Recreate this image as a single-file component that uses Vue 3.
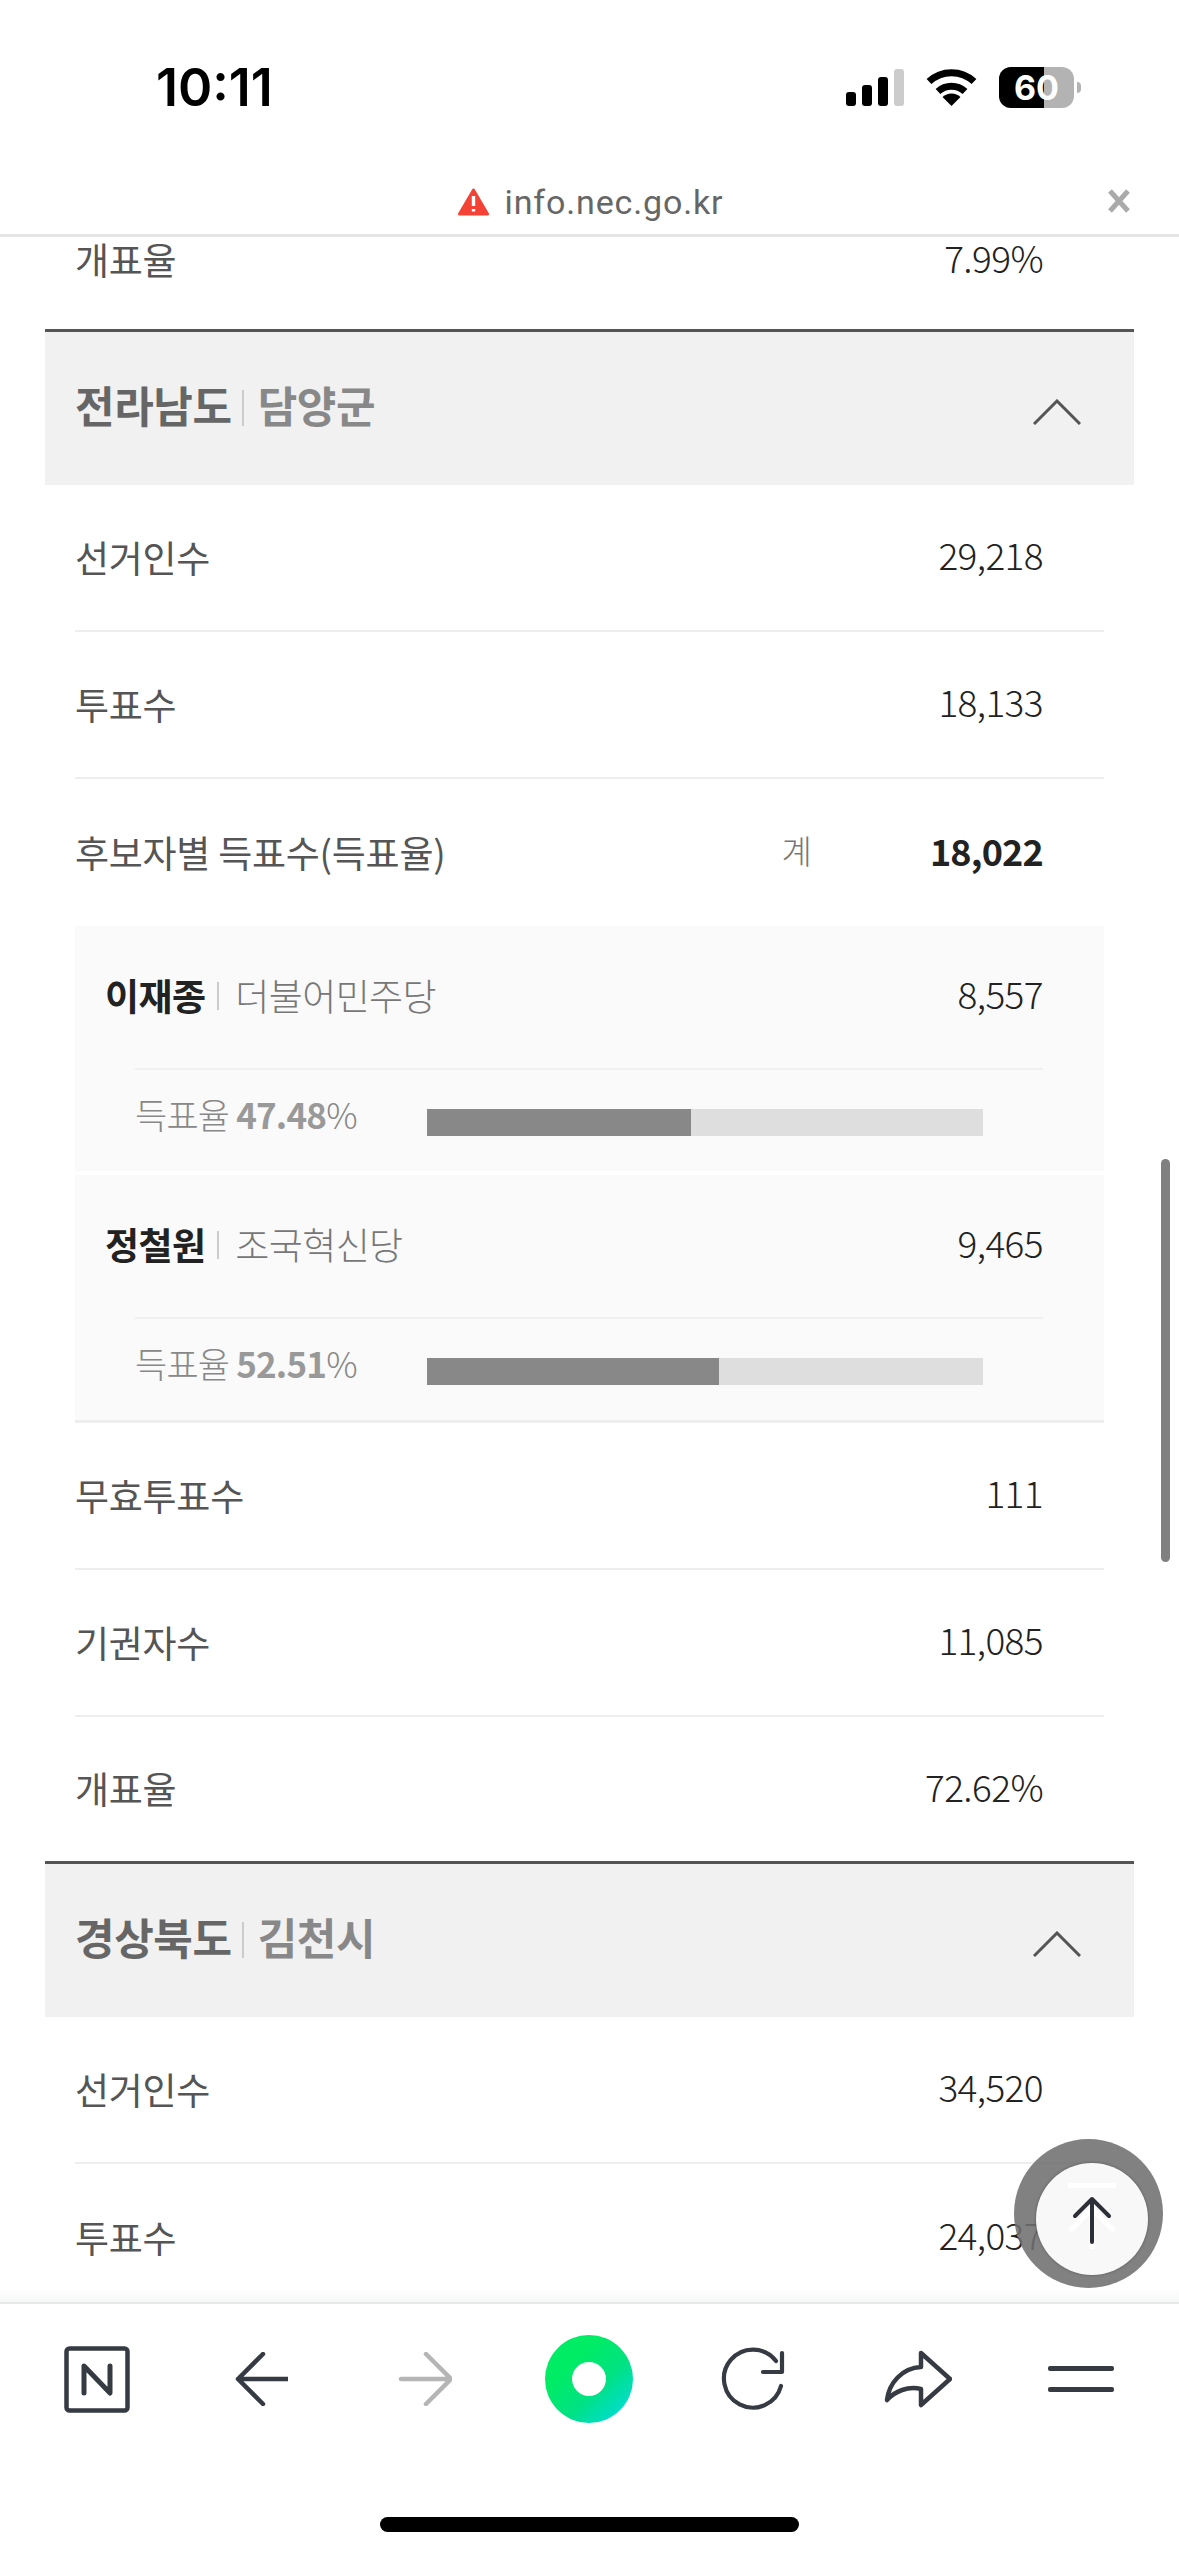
<script setup>
const firstRows = [
  { label: '선거인수', value: '29,218' },
  { label: '투표수', value: '18,133' }
]

const candidates = [
  { name: '이재종', party: '더불어민주당', votes: '8,557', rate: 47.48 },
  { name: '정철원', party: '조국혁신당', votes: '9,465', rate: 52.51 }
]

const lastRows = [
  { label: '무효투표수', value: '111' },
  { label: '기권자수', value: '11,085' },
  { label: '개표율', value: '72.62%' }
]

const secondRows = [
  { label: '선거인수', value: '34,520' },
  { label: '투표수', value: '24,037' }
]
</script>

<template>
  <div class="phone">
    <header class="status">
      <span class="time">10:11</span>
      <div class="status-icons">
        <div class="signal">
          <i class="b1"></i><i class="b2"></i><i class="b3"></i><i class="b4"></i>
        </div>
        <svg class="wifi" viewBox="0 0 51 37" fill="none" stroke="#000" stroke-width="7">
          <path d="M3 12.5A33 33 0 0 1 48 12.5" />
          <path d="M12 22.5A20 20 0 0 1 39 22.5" />
          <path d="M25.5 37L16.5 28A13 13 0 0 1 34.5 28Z" fill="#000" stroke="none" />
        </svg>
        <div class="battery">
          <div class="battery-body"><div class="battery-fill"></div><span>60</span></div>
          <div class="battery-cap"></div>
        </div>
      </div>
    </header>

    <div class="urlbar">
      <svg class="warn" viewBox="0 0 31 28">
        <path d="M15.5 2L29.5 26H1.5Z" fill="#f44336" stroke="#f44336" stroke-width="3" stroke-linejoin="round" />
        <path d="M15.5 8V18M15.5 21V23.5" stroke="#fff" stroke-width="3.4" />
      </svg>
      <span class="domain">info.nec.go.kr</span>
      <svg class="close" viewBox="0 0 24 24" stroke="#aaa" stroke-width="5">
        <path d="M3 2L21 22M21 2L3 22" />
      </svg>
    </div>

    <main class="content">
      <div class="row row-cut">
        <span class="label">개표율</span>
        <span class="value">7.99%</span>
      </div>

      <section class="section">
        <div class="section-head">
          <h2>전라남도<i class="sep"></i><span>담양군</span></h2>
          <svg class="chevron" viewBox="0 0 48 26" fill="none" stroke="#555" stroke-width="3">
            <path d="M1 25L24 2L47 25" />
          </svg>
        </div>
        <div v-for="row in firstRows" :key="row.label" class="row">
          <span class="label">{{ row.label }}</span>
          <span class="value">{{ row.value }}</span>
        </div>
        <div class="row row-plain">
          <span class="label">후보자별 득표수(득표율)</span>
          <div class="total">
            <span class="total-key">계</span>
            <strong>18,022</strong>
          </div>
        </div>
        <div class="candidates">
          <div v-for="c in candidates" :key="c.name" class="candidate">
            <div class="candidate-top">
              <div class="candidate-name"><b>{{ c.name }}</b><i class="sep"></i><span>{{ c.party }}</span></div>
              <span class="value">{{ c.votes }}</span>
            </div>
            <div class="candidate-rate">
              <div class="rate-text">득표율 <b>{{ c.rate }}</b><em>%</em></div>
              <div class="bar"><div class="bar-fill" :style="{ width: c.rate + '%' }"></div></div>
            </div>
          </div>
        </div>
        <div v-for="row in lastRows" :key="row.label" class="row">
          <span class="label">{{ row.label }}</span>
          <span class="value">{{ row.value }}</span>
        </div>
      </section>

      <section class="section">
        <div class="section-head">
          <h2>경상북도<i class="sep"></i><span>김천시</span></h2>
          <svg class="chevron" viewBox="0 0 48 26" fill="none" stroke="#555" stroke-width="3">
            <path d="M1 25L24 2L47 25" />
          </svg>
        </div>
        <div v-for="row in secondRows" :key="row.label" class="row">
          <span class="label">{{ row.label }}</span>
          <span class="value">{{ row.value }}</span>
        </div>
      </section>
    </main>

    <footer class="toolbar">
      <div class="tools">
        <svg width="66" height="67" viewBox="0 0 66 67" fill="none" stroke="#363a42" stroke-width="4.5" stroke-linejoin="round" stroke-linecap="round">
          <rect x="2.5" y="2.5" width="61" height="62" rx="3" />
          <path d="M20 47V20L46 47V20" stroke-width="5" />
        </svg>
        <svg width="54" height="54" viewBox="-2 0 54 54" fill="none" stroke="#363a42" stroke-width="4.5" stroke-linejoin="round" stroke-linecap="round">
          <path d="M27 2L2 27L27 52M2 27H52" />
        </svg>
        <svg width="54" height="54" viewBox="-1 0 54 54" fill="none" stroke="#b5b5b5" stroke-width="4.5" stroke-linejoin="round" stroke-linecap="round">
          <path d="M27 2L52 27L27 52M52 27H2" />
        </svg>
        <svg width="88" height="88" viewBox="0 0 88 88">
          <defs>
            <linearGradient id="logoGrad" x1="0.3" y1="0.3" x2="0.88" y2="0.92">
              <stop offset="0" stop-color="#00ec64" />
              <stop offset="0.5" stop-color="#00e282" />
              <stop offset="1" stop-color="#00dcd4" />
            </linearGradient>
          </defs>
          <circle cx="44" cy="44" r="44" fill="url(#logoGrad)" />
          <circle cx="44" cy="44" r="17" fill="#fff" />
        </svg>
        <svg width="66" height="66" viewBox="0 0 66 66" fill="none" stroke="#363a42" stroke-width="4.2" stroke-linejoin="round" stroke-linecap="round">
          <path d="M56 15A29 29 0 1 0 61 40" />
          <path d="M62 7V26H43" />
        </svg>
        <svg width="70" height="60" viewBox="0 0 70 60" fill="none" stroke="#363a42" stroke-width="4.5" stroke-linejoin="round" stroke-linecap="round">
          <path d="M39 4L68 30L39 56V40C26 37 13 42 5 51C7 34 20 19 39 18Z" />
        </svg>
        <div class="menu"><i></i><i></i></div>
      </div>
      <div class="home-bar"></div>
    </footer>

    <div class="scrollbar"></div>

    <div class="to-top">
      <div class="to-top-inner">
        <svg class="ghost" viewBox="0 0 48 66" fill="none" stroke="#fff" stroke-width="5">
          <path d="M0 2.5H48M24 14V66M2 48L24 26L46 48" />
        </svg>
        <svg class="up" viewBox="0 0 40 48" fill="none" stroke="#2c2e38" stroke-width="4" stroke-linecap="round" stroke-linejoin="round">
          <path d="M20 3V46M3 20L20 3L37 20" />
        </svg>
      </div>
    </div>
  </div>
</template>

<style scoped>
.phone {
  position: relative;
  width: 1179px;
  height: 2556px;
  display: flex;
  flex-direction: column;
  overflow: hidden;
  background: #fff;
  font-family: "Noto Sans CJK KR", "Noto Sans", sans-serif;
  color: #555;
}

.status {
  height: 174px;
  flex: none;
  display: flex;
  align-items: center;
  justify-content: space-between;
  padding: 0 98px 0 156px;
  box-sizing: border-box;
}

.time {
  font-family: Inter, "Liberation Sans", sans-serif;
  font-size: 52px;
  font-weight: 600;
  color: #000;
}

.status-icons {
  display: flex;
  align-items: center;
}

.signal {
  display: flex;
  align-items: flex-end;
  gap: 6px;
  height: 37px;
}

.signal i {
  width: 10px;
  border-radius: 3px;
  background: #000;
}

.signal .b1 { height: 14px; }
.signal .b2 { height: 21px; }
.signal .b3 { height: 29px; }
.signal .b4 { height: 37px; background: #ccc; }

.wifi {
  width: 51px;
  height: 37px;
  margin-left: 22px;
}

.battery {
  display: flex;
  align-items: center;
  margin-left: 22px;
}

.battery-body {
  position: relative;
  width: 75px;
  height: 41px;
  border-radius: 12px;
  overflow: hidden;
  background: #b3b3b3;
  text-align: center;
}

.battery-fill {
  position: absolute;
  left: 0;
  top: 0;
  bottom: 0;
  width: 60%;
  background: #000;
}

.battery-body span {
  position: relative;
  font-family: Inter, "Liberation Sans", sans-serif;
  font-size: 34px;
  line-height: 41px;
  font-weight: 700;
  color: #fff;
}

.battery-cap {
  width: 4px;
  height: 11px;
  margin-left: 3px;
  border-radius: 0 4px 4px 0;
  background: #b3b3b3;
}

.urlbar {
  position: relative;
  z-index: 1;
  flex: none;
  height: 63px;
  display: flex;
  align-items: center;
  justify-content: center;
  gap: 16px;
  box-sizing: border-box;
  border-bottom: 3px solid #e5e5e5;
  padding: 0 0 4px 2px;
}

.warn {
  width: 31px;
  height: 28px;
}

.domain {
  font-family: Roboto, "Noto Sans", sans-serif;
  font-size: 34px;
  letter-spacing: 0.85px;
  color: #666;
}

.close {
  position: absolute;
  left: 1107px;
  top: 15px;
  width: 24px;
  height: 24px;
}

.content {
  flex: 1;
  min-height: 0;
  padding: 0 45px;
}

.row {
  height: 147px;
  margin: 0 30px;
  padding: 0 61px 2px 0;
  display: flex;
  align-items: center;
  justify-content: space-between;
  box-sizing: border-box;
  border-bottom: 2px solid #eee;
}

.row-cut {
  height: 92px;
  padding-bottom: 48px;
  border-bottom: 0;
}

.row-cut .label,
.row-cut .value {
  line-height: 44px;
}

.row-plain,
.section > .row:last-child {
  border-bottom: 0;
}

.section > .row:last-child {
  height: 144px;
}

.section:last-child > .row:last-child {
  height: 147px;
}

.label {
  font-size: 37px;
  font-weight: 400;
  letter-spacing: -0.25px;
  color: #555;
}

.value {
  font-size: 37px;
  font-weight: 300;
  letter-spacing: -0.6px;
  line-height: 48px;
  margin-bottom: 5px;
  color: #222;
}

.section-head {
  height: 156px;
  box-sizing: border-box;
  border-top: 3px solid #555;
  background: #f1f1f1;
  padding: 0 53px 0 30px;
  display: flex;
  align-items: center;
  justify-content: space-between;
}

.section-head h2 {
  margin: 0 0 10px;
  display: flex;
  align-items: center;
  font-size: 43px;
  font-weight: 700;
  letter-spacing: -0.4px;
  color: #666;
}

.section-head h2 span {
  color: #888;
  font-weight: 700;
}

.section-head .sep {
  height: 36px;
  margin: 8px 14px 0 10px;
}

.sep {
  display: block;
  width: 2px;
  height: 28px;
  margin: 2px 16px 0 12px;
  background: #ccc;
}

.chevron {
  width: 48px;
  height: 26px;
  margin-top: 6px;
}

.total {
  display: flex;
  align-items: center;
  margin-bottom: 4px;
}

.total-key {
  font-size: 33px;
  font-weight: 300;
  color: #777;
  margin-right: 118px;
}

.total strong {
  font-size: 36px;
  font-weight: 700;
  letter-spacing: -0.8px;
  color: #222;
}

.candidates {
  margin: 0 30px;
  display: flex;
  flex-direction: column;
  gap: 4px;
  border-bottom: 3px solid #eee;
}

.candidate {
  height: 245px;
  background: #fafafa;
  padding: 0 61px 0 30px;
  box-sizing: border-box;
}

.candidate-top {
  height: 144px;
  padding-bottom: 6px;
  box-sizing: border-box;
  display: flex;
  align-items: center;
  justify-content: space-between;
  position: relative;
}

.candidate-top::after {
  content: "";
  position: absolute;
  left: 30px;
  right: 0;
  bottom: 0;
  height: 2px;
  background: #f0f0f0;
}

.candidate-name {
  display: flex;
  align-items: center;
  font-size: 37px;
  letter-spacing: -0.6px;
}

.candidate-name b {
  font-weight: 700;
  color: #222;
}

.candidate-name span {
  font-weight: 300;
  color: #777;
}

.candidate-rate {
  height: 101px;
  padding: 0 60px 0 30px;
  display: flex;
  align-items: center;
}

.rate-text {
  width: 292px;
  flex: none;
  margin-bottom: 14px;
  font-size: 35px;
  font-weight: 300;
  letter-spacing: -0.8px;
  color: #888;
}

.rate-text b {
  font-weight: 700;
  color: #999;
}

.rate-text em {
  font-style: normal;
}

.bar {
  flex: 1;
  height: 27px;
  margin-top: 3px;
  background: #dedede;
}

.bar-fill {
  height: 100%;
  background: #888;
}

.toolbar {
  position: relative;
  flex: none;
  height: 254px;
  background: #fff;
  box-sizing: border-box;
  border-top: 2px solid #e8e8e8;
}

.toolbar::before {
  content: "";
  position: absolute;
  left: 0;
  right: 0;
  top: -16px;
  height: 14px;
  background: linear-gradient(rgba(246, 247, 248, 0), #f6f7f8);
}

.tools {
  height: 150px;
  padding-left: 15px;
  display: grid;
  grid-template-columns: repeat(7, 164px);
  align-items: center;
  justify-items: center;
}

.menu {
  width: 66px;
  display: flex;
  flex-direction: column;
  gap: 16px;
}

.menu i {
  display: block;
  height: 5px;
  border-radius: 2px;
  background: #363a42;
}

.home-bar {
  width: 419px;
  height: 15px;
  margin: 63px auto 0;
  border-radius: 8px;
  background: #000;
}

.scrollbar {
  position: absolute;
  left: 1161px;
  top: 1159px;
  width: 9px;
  height: 403px;
  border-radius: 5px;
  background: #808080;
}

.to-top {
  position: absolute;
  left: 1014px;
  top: 2139px;
  width: 149px;
  height: 149px;
  border-radius: 50%;
  background: rgba(112, 112, 112, 0.88);
}

.to-top-inner {
  position: absolute;
  left: 22px;
  top: 24px;
  width: 112px;
  height: 112px;
  border-radius: 50%;
  background: #f8f8f8;
  box-shadow: 0 0 3px rgba(0, 0, 0, 0.3);
}

.ghost {
  position: absolute;
  left: 32px;
  top: 20px;
  width: 48px;
  height: 66px;
}

.up {
  position: absolute;
  left: 36px;
  top: 33px;
  width: 40px;
  height: 48px;
}
</style>
